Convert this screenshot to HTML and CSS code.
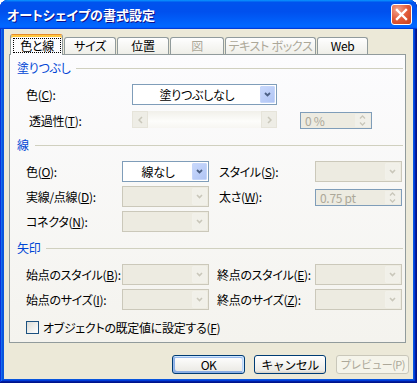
FILE: index.html
```html
<!DOCTYPE html>
<html lang="ja">

<head>
    <meta charset="UTF-8">
    <title>オートシェイプの書式設定</title>
    <link rel="stylesheet" href="styles.css">
</head>

<body>
    <div class="window">
        <div class="titlebar">
            <span class="title">オートシェイプの書式設定</span>
            <div class="close">
                <svg width="19" height="19" viewBox="0 0 19 19"><path d="M5 5l9 9M14 5l-9 9" stroke="#fff" stroke-width="2.4" stroke-linecap="square"/></svg>
            </div>
        </div>

        <div class="body">
            <div class="tabs">
                <div class="tab active"><span class="focus">色と線</span></div>
                <div class="tab">サイズ</div>
                <div class="tab">位置</div>
                <div class="tab disabled">図</div>
                <div class="tab disabled">テキスト ボックス</div>
                <div class="tab">Web</div>
            </div>

            <div class="panel">
                <!-- 塗りつぶし -->
                <div class="group-title">塗りつぶし</div>
                <div class="grid fill">
                    <span class="label">色(<u>C</u>):</span>
                    <div class="combo">
                        <span class="value">塗りつぶしなし</span>
                        <span class="drop"><svg width="7" height="5" viewBox="0 0 7 5"><path d="M1 1l2.5 2.5L6 1" fill="none" stroke="#4D6185" stroke-width="1.8"/></svg></span>
                    </div>
                    <span></span>
                    <span></span>

                    <span class="label indent">透過性(<u>T</u>):</span>
                    <div class="slider">
                        <span class="sbtn"><svg width="5" height="8" viewBox="0 0 5 8"><path d="M4 1L1 4l3 3" fill="none" stroke="#C9C7BA" stroke-width="1.5"/></svg></span>
                        <span class="track"></span>
                        <span class="sbtn"><svg width="5" height="8" viewBox="0 0 5 8"><path d="M1 1l3 3-3 3" fill="none" stroke="#C9C7BA" stroke-width="1.5"/></svg></span>
                    </div>
                    <span></span>
                    <div class="spin">
                        <span class="value">0 %</span>
                        <span class="arrows">
                            <span><svg width="7" height="4" viewBox="0 0 7 4"><path d="M1 3.5L3.5 1 6 3.5" fill="none" stroke="#C9C7BA" stroke-width="1.3"/></svg></span>
                            <span><svg width="7" height="4" viewBox="0 0 7 4"><path d="M1 .5L3.5 3 6 .5" fill="none" stroke="#C9C7BA" stroke-width="1.3"/></svg></span>
                        </span>
                    </div>
                </div>

                <!-- 線 -->
                <div class="group-title">線</div>
                <div class="grid two-col">
                    <span class="label">色(<u>O</u>):</span>
                    <div class="combo">
                        <span class="value">線なし</span>
                        <span class="drop"><svg width="7" height="5" viewBox="0 0 7 5"><path d="M1 1l2.5 2.5L6 1" fill="none" stroke="#4D6185" stroke-width="1.8"/></svg></span>
                    </div>
                    <span></span>
                    <span class="label">スタイル(<u>S</u>):</span>
                    <div class="combo off">
                        <span class="value"></span>
                        <span class="drop"><svg width="7" height="5" viewBox="0 0 7 5"><path d="M1 1l2.5 2.5L6 1" fill="none" stroke="#C9C7BA" stroke-width="1.6"/></svg></span>
                    </div>

                    <span class="label">実線/点線(<u>D</u>):</span>
                    <div class="combo off">
                        <span class="value"></span>
                        <span class="drop"><svg width="7" height="5" viewBox="0 0 7 5"><path d="M1 1l2.5 2.5L6 1" fill="none" stroke="#C9C7BA" stroke-width="1.6"/></svg></span>
                    </div>
                    <span></span>
                    <span class="label">太さ(<u>W</u>):</span>
                    <div class="spin thin">
                        <span class="value">0.75 pt</span>
                        <span class="arrows">
                            <span><svg width="7" height="4" viewBox="0 0 7 4"><path d="M1 3.5L3.5 1 6 3.5" fill="none" stroke="#C9C7BA" stroke-width="1.3"/></svg></span>
                            <span><svg width="7" height="4" viewBox="0 0 7 4"><path d="M1 .5L3.5 3 6 .5" fill="none" stroke="#C9C7BA" stroke-width="1.3"/></svg></span>
                        </span>
                    </div>

                    <span class="label">コネクタ(<u>N</u>):</span>
                    <div class="combo off">
                        <span class="value"></span>
                        <span class="drop"><svg width="7" height="5" viewBox="0 0 7 5"><path d="M1 1l2.5 2.5L6 1" fill="none" stroke="#C9C7BA" stroke-width="1.6"/></svg></span>
                    </div>
                </div>

                <!-- 矢印 -->
                <div class="group-title">矢印</div>
                <div class="grid two-col arrows-grid">
                    <span class="label">始点のスタイル(<u>B</u>):</span>
                    <div class="combo off">
                        <span class="value"></span>
                        <span class="drop"><svg width="7" height="5" viewBox="0 0 7 5"><path d="M1 1l2.5 2.5L6 1" fill="none" stroke="#C9C7BA" stroke-width="1.6"/></svg></span>
                    </div>
                    <span></span>
                    <span class="label pull">終点のスタイル(<u>E</u>):</span>
                    <div class="combo off">
                        <span class="value"></span>
                        <span class="drop"><svg width="7" height="5" viewBox="0 0 7 5"><path d="M1 1l2.5 2.5L6 1" fill="none" stroke="#C9C7BA" stroke-width="1.6"/></svg></span>
                    </div>

                    <span class="label">始点のサイズ(<u>I</u>):</span>
                    <div class="combo off">
                        <span class="value"></span>
                        <span class="drop"><svg width="7" height="5" viewBox="0 0 7 5"><path d="M1 1l2.5 2.5L6 1" fill="none" stroke="#C9C7BA" stroke-width="1.6"/></svg></span>
                    </div>
                    <span></span>
                    <span class="label pull">終点のサイズ(<u>Z</u>):</span>
                    <div class="combo off">
                        <span class="value"></span>
                        <span class="drop"><svg width="7" height="5" viewBox="0 0 7 5"><path d="M1 1l2.5 2.5L6 1" fill="none" stroke="#C9C7BA" stroke-width="1.6"/></svg></span>
                    </div>
                </div>

                <div class="check-row">
                    <span class="checkbox"></span>
                    <span>オブジェクトの既定値に設定する(<u>F</u>)</span>
                </div>
            </div>

            <div class="buttons">
                <button type="button" class="btn default">OK</button>
                <button type="button" class="btn">キャンセル</button>
                <button type="button" class="btn preview" disabled>プレビュー(P)</button>
            </div>
        </div>
    </div>
</body>

</html>
```

FILE: styles.css
```css
* {
    box-sizing: border-box;
}

body {
    margin: 0;
    background-color: #FFFFFF;
    color: #000000;
    font-family: "Noto Sans CJK JP", "Liberation Sans", sans-serif;
    font-size: 12px;
    font-feature-settings: "palt";
    letter-spacing: -0.3px;
}

.window {
    width: 417px;
    height: 383px;
    display: flex;
    flex-direction: column;
    background-color: #0855DD;
    border-radius: 8px 8px 0 0;
    overflow: hidden;
    box-shadow: inset -1px -1px #00138C, inset 1px 1px #0831D9, inset -2px -2px #001EA0, inset 2px 2px #166AEE, inset -3px -3px #003BDA, inset 3px 3px #0855DD;
}

/* title bar */
.titlebar {
    height: 29px;
    flex-shrink: 0;
    display: flex;
    align-items: center;
    justify-content: space-between;
    padding: 0 5px 0 7px;
    background: linear-gradient(180deg, #0997FF, #0053EE 8%, #0050EE 40%, #0066FF 88%, #0066FF 93%, #005BFF 95%, #003DD7 96%, #003DD7);
}

.title {
    color: #FFFFFF;
    font-size: 13px;
    font-weight: bold;
    letter-spacing: 0;
    text-shadow: 1px 1px #0F1089;
}

.close {
    width: 21px;
    height: 21px;
    display: flex;
    align-items: center;
    justify-content: center;
    border: 1px solid #FFFFFF;
    border-radius: 3px;
    background: radial-gradient(circle at 30% 25%, #F3A58E, #E25B3A 50%, #C63F1C);
}

/* dialog body */
.body {
    flex: 1;
    margin: 0 4px 4px;
    padding: 5px 4px 0 5px;
    background-color: #ECE9D8;
    display: flex;
    flex-direction: column;
}

.tabs {
    height: 21px;
    display: flex;
    align-items: flex-end;
    gap: 1px;
    padding-left: 1px;
    margin-bottom: -1px;
    position: relative;
    z-index: 1;
}

.tab {
    height: 17px;
    margin-bottom: 1px;
    border: 1px solid #919B9C;
    border-bottom: none;
    border-radius: 3px 3px 0 0;
    background: linear-gradient(180deg, #FFFFFF, #FAFAF9 26%, #F0F0EA 95%, #ECEBE5);
    text-align: center;
    line-height: 15px;
    white-space: nowrap;
}

.tab:nth-child(1) { width: 53px; }
.tab:nth-child(2) { width: 52px; }
.tab:nth-child(3) { width: 52px; }
.tab:nth-child(4) { width: 54px; }
.tab:nth-child(5) { width: 91px; }
.tab:nth-child(6) { width: 51px; }

.tab.disabled {
    color: #ACA899;
}

.tab.active {
    height: 21px;
    margin-bottom: 0;
    background: #FCFCFE;
    border-top: 1px solid #E68B2C;
    box-shadow: inset 0 2px #FFC83C;
}

.focus {
    display: block;
    height: 15px;
    margin: 3px 1px 0 2px;
    border: 1px dotted #000000;
    line-height: 13px;
}

/* tab page */
.panel {
    height: 289px;
    margin-right: 3px;
    padding: 6px 2px 0 0;
    border: 1px solid #919B9C;
    background: linear-gradient(180deg, #FCFCFE, #F4F3EE);
}

.group-title {
    height: 14px;
    display: flex;
    align-items: center;
    gap: 6px;
    padding-left: 7px;
    color: #0046D5;
    line-height: 14px;
}

.group-title::after {
    content: "";
    flex: 1;
    height: 1px;
    background-color: #D0D0BF;
}

.grid {
    display: grid;
    margin: 9px 0 9px 16px;
}

.grid.fill {
    grid-template-columns: 106px 145px 23px 72px;
    grid-template-rows: 21px 18px;
    row-gap: 6px;
}

.grid.two-col {
    grid-template-columns: 96px 87px 10px 96px 87px;
    grid-auto-rows: 21px;
    row-gap: 4px;
}

.grid.arrows-grid {
    margin-top: 9px;
}

.group-title + .grid {
    margin-top: 9px;
}

.grid.two-col + .group-title {
    margin-top: 2px;
}

.label {
    align-self: center;
    white-space: nowrap;
}

.label.indent {
    padding-left: 3px;
}

.label.pull {
    margin-left: -2px;
}

/* combo box */
.combo {
    display: flex;
    padding: 1px;
    border: 1px solid #7F9DB9;
    background-color: #FFFFFF;
}

.combo .value {
    flex: 1;
    align-self: center;
    text-align: center;
}

.combo .drop {
    width: 15px;
    display: flex;
    align-items: center;
    justify-content: center;
    border: 1px solid #C6D6FA;
    border-radius: 1px;
    background: linear-gradient(135deg, #C8D8FC, #B1C5F4);
}

.combo.off {
    border-color: #CBC8BA;
    background-color: #EDEBE1;
}

.combo.off .drop {
    border-color: #F2F1EA;
    background: #F1F0E9;
}

/* slider */
.slider {
    display: flex;
    height: 17px;
}

.sbtn {
    width: 16px;
    display: flex;
    align-items: center;
    justify-content: center;
    border: 1px solid #E6E4DA;
    background-color: #EEEDE6;
}

.track {
    flex: 1;
    background: linear-gradient(180deg, #F1F0EA, #FDFDFB 60%, #F7F6F2);
}

/* spin box */
.spin {
    display: flex;
    height: 17px;
    align-self: center;
    margin-top: 1px;
    padding: 1px;
    border: 1px solid #7F9DB9;
    background-color: #EDEBE1;
    color: #ACA899;
}

.spin.thin {
    height: 17px;
    margin-top: 2px;
}

.spin .value {
    flex: 1;
    padding-left: 3px;
    line-height: 13px;
}

.spin .arrows {
    width: 15px;
    display: flex;
    flex-direction: column;
    background-color: #F1F0E9;
}

.spin .arrows span {
    flex: 1;
    display: flex;
    align-items: center;
    justify-content: center;
}

/* check box */
.check-row {
    display: flex;
    align-items: center;
    gap: 4px;
    height: 14px;
    margin: 10px 0 0 16px;
}

.checkbox {
    width: 13px;
    height: 13px;
    border: 1px solid #1C5180;
    background: linear-gradient(135deg, #DCDCD7, #FFFFFF);
}

/* dialog buttons */
.buttons {
    display: flex;
    justify-content: flex-end;
    gap: 9px;
    margin-top: 12px;
}

.btn {
    width: 73px;
    height: 19px;
    padding: 0;
    border: 1px solid #003C74;
    border-radius: 3px;
    background: linear-gradient(180deg, #FFFFFF, #ECEBE6 86%, #D6D0C5);
    font-family: inherit;
    font-size: 12px;
    font-weight: normal;
    letter-spacing: -0.5px;
    white-space: nowrap;
    color: #000000;
    line-height: 15px;
}

.btn + .btn {
    width: 72px;
}

.btn.preview {
    width: 73px;
    margin-left: 1px;
    font-size: 11px;
    letter-spacing: -0.6px;
}

.btn.default {
    box-shadow: inset -1px 1px #CEE7FF, inset 1px 2px #98B8EA, inset -2px 2px #BCD4F6, inset 1px -1px #89ADE4, inset 2px -2px #89ADE4;
}

.btn:disabled {
    border-color: #C9C7BA;
    background: #F5F4EA;
    color: #ACA899;
}
```
